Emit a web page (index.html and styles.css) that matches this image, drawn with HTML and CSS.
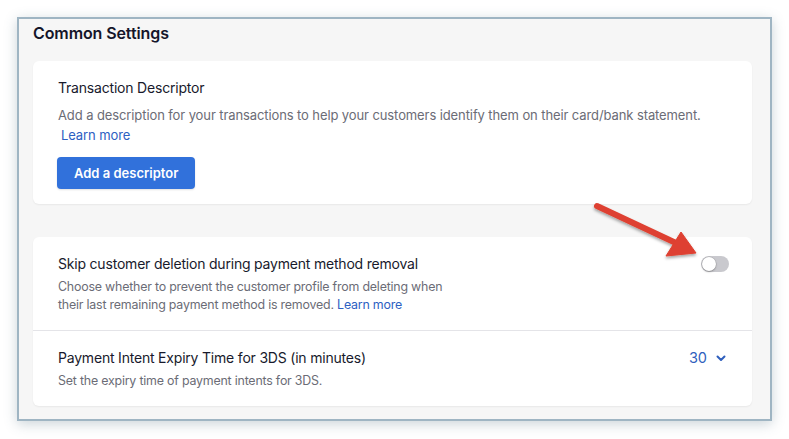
FILE: index.html
```html
<!DOCTYPE html>
<html lang="en">
<head>
<meta charset="utf-8">
<title>Common Settings</title>
<link rel="stylesheet" href="styles.css">
</head>
<body>
<div class="frame">
  <h2 class="page-title">Common Settings</h2>
  <section class="card card-descriptor">
    <h3 class="item-title">Transaction Descriptor</h3>
    <p class="desc">Add a description for your transactions to help your customers identify them on their card/bank statement. <a class="link link-indent" href="#">Learn more</a></p>
    <button class="btn" type="button">Add a descriptor</button>
  </section>
  <section class="card card-list">
    <div class="row row-first">
      <div class="row-text">
        <h3 class="item-title">Skip customer deletion during payment method removal</h3>
        <p class="desc desc-tight">Choose whether to prevent the customer profile from deleting when<br>their last remaining payment method is removed. <a class="link" href="#">Learn more</a></p>
      </div>
      <span class="toggle"><span class="knob"></span></span>
    </div>
    <div class="row">
      <div class="row-text">
        <h3 class="item-title">Payment Intent Expiry Time for 3DS (in minutes)</h3>
        <p class="desc desc-tight">Set the expiry time of payment intents for 3DS.</p>
      </div>
      <div class="select">
        <span class="select-value">30</span>
        <svg class="chevron" width="10" height="7" viewBox="0 0 10 7"><path d="M1.5 1.5 L5 5 L8.5 1.5" fill="none" stroke="#2f5fbd" stroke-width="2" stroke-linecap="round" stroke-linejoin="round"/></svg>
      </div>
    </div>
  </section>
</div>
<svg class="arrow" width="130" height="75" viewBox="585 195 130 75">
  <defs>
    <filter id="sh" x="-20%" y="-20%" width="140%" height="160%">
      <feDropShadow dx="0" dy="2" stdDeviation="1.6" flood-color="#000" flood-opacity="0.35"/>
    </filter>
  </defs>
  <g filter="url(#sh)" fill="#de4030" stroke="#de4030">
    <line x1="597" y1="206" x2="676" y2="243" stroke-width="6" stroke-linecap="round"/>
    <polygon points="696,253 666,256 681,232" stroke-width="1" stroke-linejoin="round"/>
  </g>
</svg>
</body>
</html>
```
FILE: styles.css
```css
html, body {
  margin: 0;
  padding: 0;
  background: #ffffff;
}
body {
  font-family: Inter, "Noto Sans", "Liberation Sans", sans-serif;
  color: #1a1b2e;
  position: relative;
  width: 789px;
  height: 439px;
  overflow: hidden;
}
.frame {
  margin: 17px 0 0 17px;
  width: 719px;
  padding: 2px 18px 13px 14px;
  border: 2px solid #9fb5c3;
  background: #f6f6f6;
  box-shadow: 0 3px 12px rgba(70, 100, 120, 0.28);
}
.page-title {
  margin: 0 0 16px 0;
  font-size: 16px;
  line-height: 24px;
  font-weight: 600;
  color: #14152a;
  letter-spacing: -0.1px;
}
.card {
  background: #ffffff;
  border-radius: 6px;
  box-shadow: 0 1px 2px rgba(0, 0, 0, 0.06);
}
.card-descriptor {
  padding: 17px 25px 15px 25px;
  margin-bottom: 33px;
}
.item-title {
  margin: 0;
  font-size: 14px;
  line-height: 20px;
  font-weight: 400;
  letter-spacing: -0.2px;
  color: #181a2c;
}
.desc {
  margin: 7px 0 0 0;
  font-size: 13px;
  line-height: 20px;
  letter-spacing: -0.1px;
  color: #6b6c76;
}
.desc-tight {
  margin-top: 4px;
  font-size: 12.4px;
  letter-spacing: -0.2px;
  line-height: 18px;
}
.link {
  color: #2d60c2;
  text-decoration: none;
}
.link-indent {
  margin-left: 3px;
}
.btn {
  margin-top: 12px;
  margin-left: -1px;
  height: 32px;
  padding: 0 17px;
  border: none;
  border-radius: 4px;
  background: #3171db;
  color: #ffffff;
  font-family: inherit;
  font-size: 13px;
  font-weight: 600;
  box-shadow: 0 1px 2px rgba(0, 0, 0, 0.12);
}
.card-list {
  display: flex;
  flex-direction: column;
}
.row {
  display: flex;
  justify-content: space-between;
  align-items: flex-start;
  padding: 17px 23px 16px 25px;
}
.row-first {
  border-bottom: 1px solid #e4e4e8;
}
.toggle {
  margin-top: 2px;
  width: 28px;
  height: 16px;
  border-radius: 8px;
  background: #c9c9ce;
  position: relative;
  flex: none;
}
.knob {
  position: absolute;
  left: 1px;
  top: 1px;
  width: 14px;
  height: 14px;
  border-radius: 50%;
  background: #ffffff;
  box-shadow: 0 0 0 0.5px rgba(0, 0, 0, 0.15), 0 1px 2px rgba(0, 0, 0, 0.25);
}
.select {
  display: flex;
  align-items: center;
  gap: 9px;
  font-size: 14.5px;
  line-height: 20px;
  color: #2f5fbd;
  margin-right: 3px;
}
.chevron {
  display: block;
}
.arrow {
  position: absolute;
  left: 585px;
  top: 195px;
  pointer-events: none;
  overflow: visible;
}
```
